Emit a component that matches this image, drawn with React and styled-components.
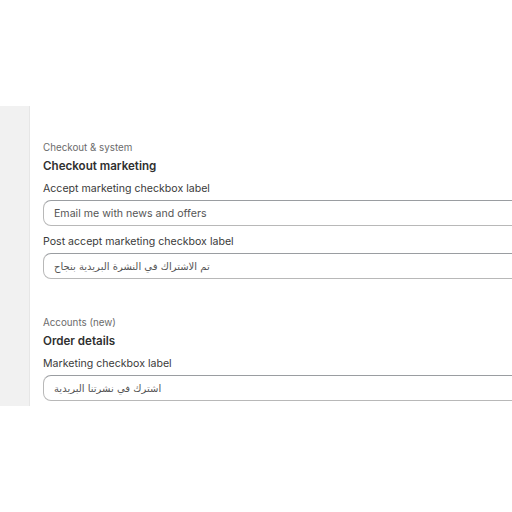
import React from 'react';
import styled, { createGlobalStyle } from 'styled-components';

const GlobalStyle = createGlobalStyle`
    html, body {
        margin: 0;
        padding: 0;
        background: #ffffff;
        font-family: Inter, "DejaVu Sans", sans-serif;
    }
`;

const sections = [
    {
        caption: 'Checkout & system',
        title: 'Checkout marketing',
        fields: [
            { label: 'Accept marketing checkbox label', value: 'Email me with news and offers', rtl: false },
            { label: 'Post accept marketing checkbox label', value: 'تم الاشتراك في النشرة البريدية بنجاح', rtl: true },
        ],
    },
    {
        caption: 'Accounts (new)',
        title: 'Order details',
        fields: [
            { label: 'Marketing checkbox label', value: 'اشترك في نشرتنا البريدية', rtl: true },
        ],
    },
];

export default function App() {
    return (
        <>
            <GlobalStyle />
            <Page>
                <Frame>
                    <Sidebar />
                    <Main>
                        {sections.map((section) => (
                            <Section key={section.title}>
                                <Caption>{section.caption}</Caption>
                                <Heading>{section.title}</Heading>
                                {section.fields.map((field) => (
                                    <Field key={field.label}>
                                        <Label>{field.label}</Label>
                                        <Input $rtl={field.rtl}>
                                            <span dir={field.rtl ? 'rtl' : 'ltr'}>{field.value}</span>
                                        </Input>
                                    </Field>
                                ))}
                            </Section>
                        ))}
                    </Main>
                </Frame>
            </Page>
        </>
    );
}

const Page = styled.div`
    width: 512px;
    height: 512px;
    padding-top: 106px;
    box-sizing: border-box;
    overflow: hidden;
`;

const Frame = styled.div`
    display: flex;
    height: 300px;
    overflow: hidden;
`;

const Sidebar = styled.div`
    flex: 0 0 29px;
    background: #f1f1f1;
    border-right: 1px solid #e6e6e6;
`;

const Main = styled.div`
    flex: 1;
    padding: 34px 0 0 13px;
    display: flex;
    flex-direction: column;
    gap: 36px;
    min-width: 0;
`;

const Section = styled.div`
    display: flex;
    flex-direction: column;
`;

const Caption = styled.div`
    font-size: 9.8px;
    line-height: 16px;
    color: #6b6b6b;
`;

const Heading = styled.div`
    font-size: 11.6px;
    line-height: 20px;
    font-weight: 600;
    color: #303030;
`;

const Field = styled.div`
    display: flex;
    flex-direction: column;
    margin-top: 4px;

    & + & {
        margin-top: 7px;
    }
`;

const Label = styled.div`
    font-size: 10.6px;
    line-height: 17px;
    color: #3a3a3a;
    margin-bottom: 3px;
`;

const Input = styled.div`
    width: 560px;
    height: 26px;
    box-sizing: border-box;
    display: flex;
    align-items: center;
    padding: 0 10px;
    border: 1px solid #b8b8b8;
    border-top-color: #9a9da1;
    border-radius: 8px;
    font-size: ${(p) => (p.$rtl ? '10px' : '10.6px')};
    color: #555555;
    font-family: ${(p) => (p.$rtl ? '"DejaVu Sans", sans-serif' : 'Inter, sans-serif')};
`;
